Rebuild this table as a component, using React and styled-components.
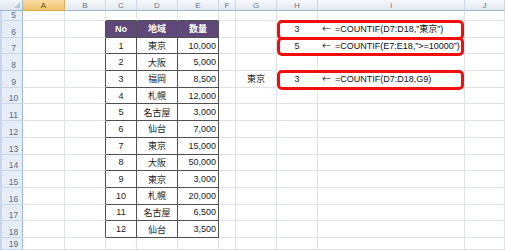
import React from 'react'
import styled, { createGlobalStyle, css } from 'styled-components'

const GRID = '#dde1ea'
const DARK = '#505050'
const HEAD_LINE = '#9eb6ce'

const COLS = ['A', 'B', 'C', 'D', 'E', 'F', 'G', 'H', 'I', 'J']
const ROWS = [5, 6, 7, 8, 9, 10, 11, 12, 13, 14, 15, 16, 17, 18, 19]

const DATA = [
  ['東京', '10,000'],
  ['大阪', '5,000'],
  ['福岡', '8,500'],
  ['札幌', '12,000'],
  ['名古屋', '3,000'],
  ['仙台', '7,000'],
  ['東京', '15,000'],
  ['大阪', '50,000'],
  ['東京', '3,000'],
  ['札幌', '20,000'],
  ['名古屋', '6,500'],
  ['仙台', '3,500'],
]

const FORMULAS = [
  { row: 6, value: '3', text: '=COUNTIF(D7:D18,”東京”)' },
  { row: 7, value: '5', text: '=COUNTIF(E7:E18,”>=10000”)' },
  { row: 9, value: '3', text: '=COUNTIF(D7:D18,G9)' },
]

const GlobalStyle = createGlobalStyle`
  html, body {
    margin: 0;
    padding: 0;
    background: #fff;
  }
  body {
    font-family: "Liberation Sans", "Noto Sans CJK JP", sans-serif;
  }
`

const Sheet = styled.div`
  width: 505px;
  height: 250px;
  overflow: hidden;
  display: grid;
  grid-template-columns: 23px 42px 41px 31px 41px 41px 17px 41px 41px 147px 1fr;
  grid-template-rows: 11px 10px repeat(13, 16.7px) 1fr;
  font-size: 9px;
  color: #1a1a1a;
`

const Corner = styled.div`
  grid-area: 1 / 1;
  position: relative;
  background: linear-gradient(#f3f6fa, #dbe3ee);
  border-right: 1px solid ${HEAD_LINE};
  border-bottom: 1px solid ${HEAD_LINE};

  &::after {
    content: '';
    position: absolute;
    right: 2px;
    bottom: 2px;
    border-left: 6px solid transparent;
    border-bottom: 6px solid #b9c6d6;
  }
`

const ColHead = styled.div`
  grid-area: 1 / ${({ $col }) => $col};
  display: flex;
  align-items: center;
  justify-content: center;
  font-size: 8px;
  color: #6a7688;
  background: linear-gradient(#f6f8fb, #e3e9f1);
  border-right: 1px solid #cbd5e3;
  border-bottom: 1px solid ${HEAD_LINE};

  ${({ $active }) => $active && css`
    background: linear-gradient(#f9dca5, #f2c46a);
    border-right-color: #e2b15c;
    border-bottom-color: #e0a94a;
    color: #5a4a2a;
  `}
`

const RowHead = styled.div`
  grid-area: ${({ $row }) => $row} / 1;
  display: flex;
  align-items: flex-end;
  justify-content: center;
  padding: 0 0 0 3px;
  font-size: 8.5px;
  line-height: 10px;
  color: #5b6a80;
  background: #e6edf7;
  border-left: 2px solid #c7d6ea;
  border-right: 1px solid ${HEAD_LINE};
  border-bottom: 1px solid #c9d6e7;
  box-sizing: border-box;
`

const Cell = styled.div`
  grid-area: ${({ $row }) => $row} / ${({ $col }) => $col};
  display: flex;
  align-items: center;
  justify-content: ${({ $align }) => $align || 'flex-start'};
  padding: 0 ${({ $align }) => ($align === 'flex-end' ? '2px' : '0')} 0
    ${({ $indent }) => $indent || 0}px;
  white-space: nowrap;
  min-width: 0;
  border-right: 1px solid ${({ $right }) => $right || GRID};
  border-bottom: 1px solid ${({ $bottom }) => $bottom || GRID};
  background: ${({ $bg }) => $bg || '#fff'};
  color: ${({ $color }) => $color || '#1a1a1a'};
  font-weight: ${({ $bold }) => ($bold ? 700 : 400)};
`

const Arrow = styled.span`
  font-family: "Noto Sans CJK JP", sans-serif;
  font-size: 9px;
  margin-right: 4px;
`

const Formula = styled.span`
  color: #111;
`

const RedBox = styled.div`
  grid-area: ${({ $row }) => $row} / 9 / ${({ $row }) => $row + 1} / 11;
  margin: -1px 1px -2px 0;
  border: 3px solid #f20d0d;
  border-radius: 5px;
  z-index: 1;
  pointer-events: none;
`

const inTable = (r, c) => r >= 6 && r <= 18 && c >= 3 && c <= 5

const cellContent = (r, c) => {
  if (r === 6 && c === 3) return { text: 'No', head: true }
  if (r === 6 && c === 4) return { text: '地域', head: true }
  if (r === 6 && c === 5) return { text: '数量', head: true }
  if (r >= 7 && r <= 18) {
    const i = r - 7
    if (c === 3) return { text: String(i + 1), align: 'center' }
    if (c === 4) return { text: DATA[i][0], align: 'center' }
    if (c === 5) return { text: DATA[i][1], align: 'flex-end' }
  }
  if (r === 9 && c === 7) return { text: '東京', align: 'center' }
  const f = FORMULAS.find((x) => x.row === r)
  if (f && c === 8) return { text: f.value, align: 'center', boxed: true }
  if (f && c === 9) {
    return {
      text: (
        <>
          <Arrow>←</Arrow>
          <Formula>{f.text}</Formula>
        </>
      ),
      indent: 4,
    }
  }
  return { text: '' }
}

export default function App() {
  const cells = []
  ROWS.forEach((r, ri) => {
    COLS.forEach((_, ci) => {
      const c = ci + 1
      const info = cellContent(r, c)
      const right = inTable(r, c) || inTable(r, c + 1) ? DARK : info.boxed ? 'transparent' : GRID
      const bottom = inTable(r, c) || inTable(r + 1, c) ? DARK : GRID
      cells.push(
        <Cell
          key={`${r}-${c}`}
          $row={ri + 2}
          $col={c + 1}
          $align={info.head ? 'center' : info.align}
          $indent={info.indent}
          $right={right}
          $bottom={bottom}
          $bg={info.head ? '#5f497a' : undefined}
          $color={info.head ? '#fff' : undefined}
          $bold={info.head}
        >
          {info.text}
        </Cell>
      )
    })
  })

  return (
    <>
      <GlobalStyle />
      <Sheet>
        <Corner />
        {COLS.map((l, i) => (
          <ColHead key={l} $col={i + 2} $active={l === 'A'}>
            {l}
          </ColHead>
        ))}
        {ROWS.map((n, i) => (
          <RowHead key={n} $row={i + 2}>
            {n}
          </RowHead>
        ))}
        {cells}
        {FORMULAS.map((f) => (
          <RedBox key={f.row} $row={f.row - 3} />
        ))}
      </Sheet>
    </>
  )
}
